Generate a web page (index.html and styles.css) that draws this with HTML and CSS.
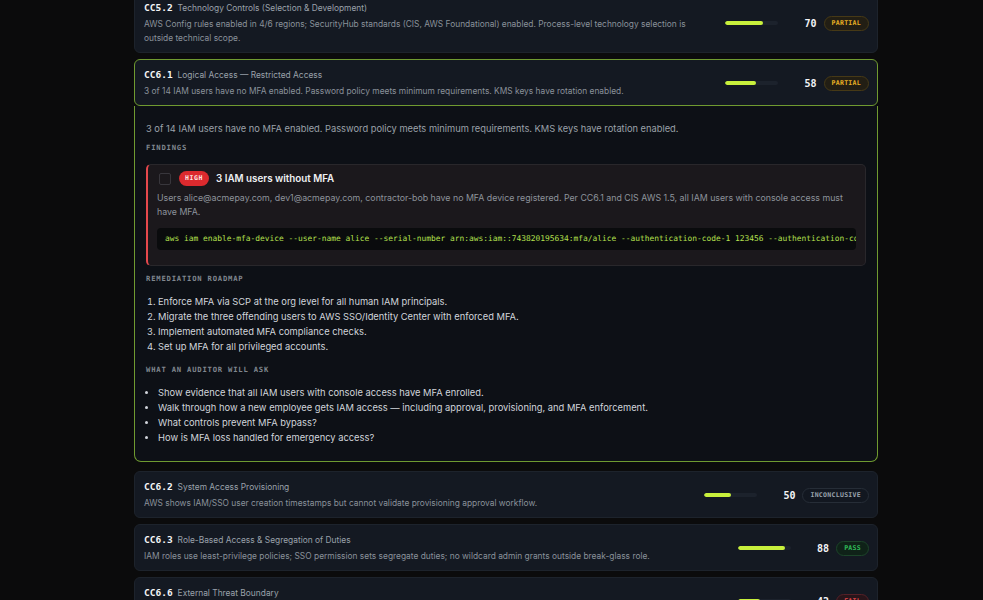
FILE: index.html
```html
<!DOCTYPE html>
<html lang="en">
<head>
<meta charset="utf-8">
<title>Controls</title>
<link rel="stylesheet" href="styles.css">
</head>
<body>
<main class="list">
  <article class="control">
    <div class="control-main">
      <div class="control-title"><span class="code">CC5.2</span><span class="name">Technology Controls (Selection &amp; Development)</span></div>
      <p class="control-desc">AWS Config rules enabled in 4/6 regions; SecurityHub standards (CIS, AWS Foundational) enabled. Process-level technology selection is outside technical scope.</p>
    </div>
    <div class="control-meta">
      <div class="bar"><div class="bar-fill" style="width:70%"></div></div>
      <span class="score">70</span>
      <span class="badge badge-partial">PARTIAL</span>
    </div>
  </article>

  <section class="expanded">
    <article class="control control-open">
      <div class="control-main">
        <div class="control-title"><span class="code">CC6.1</span><span class="name">Logical Access — Restricted Access</span></div>
        <p class="control-desc">3 of 14 IAM users have no MFA enabled. Password policy meets minimum requirements. KMS keys have rotation enabled.</p>
      </div>
      <div class="control-meta">
        <div class="bar"><div class="bar-fill" style="width:58%"></div></div>
        <span class="score">58</span>
        <span class="badge badge-partial">PARTIAL</span>
      </div>
    </article>
    <div class="detail">
      <p class="summary">3 of 14 IAM users have no MFA enabled. Password policy meets minimum requirements. KMS keys have rotation enabled.</p>
      <h4 class="label label-first">Findings</h4>
      <div class="finding">
        <div class="finding-head">
          <span class="checkbox"></span>
          <span class="sev">HIGH</span>
          <span class="finding-title">3 IAM users without MFA</span>
        </div>
        <p class="finding-desc">Users alice@acmepay.com, dev1@acmepay.com, contractor-bob have no MFA device registered. Per CC6.1 and CIS AWS 1.5, all IAM users with console access must have MFA.</p>
        <pre class="cmd">aws iam enable-mfa-device --user-name alice --serial-number arn:aws:iam::743820195634:mfa/alice --authentication-code-1 123456 --authentication-code-2 789012</pre>
      </div>
      <h4 class="label label-roadmap">Remediation Roadmap</h4>
      <ol class="steps">
        <li>Enforce MFA via SCP at the org level for all human IAM principals.</li>
        <li>Migrate the three offending users to AWS SSO/Identity Center with enforced MFA.</li>
        <li>Implement automated MFA compliance checks.</li>
        <li>Set up MFA for all privileged accounts.</li>
      </ol>
      <h4 class="label label-ask">What an auditor will ask</h4>
      <ul class="asks">
        <li>Show evidence that all IAM users with console access have MFA enrolled.</li>
        <li>Walk through how a new employee gets IAM access — including approval, provisioning, and MFA enforcement.</li>
        <li>What controls prevent MFA bypass?</li>
        <li>How is MFA loss handled for emergency access?</li>
      </ul>
    </div>
  </section>

  <article class="control">
    <div class="control-main">
      <div class="control-title"><span class="code">CC6.2</span><span class="name">System Access Provisioning</span></div>
      <p class="control-desc">AWS shows IAM/SSO user creation timestamps but cannot validate provisioning approval workflow.</p>
    </div>
    <div class="control-meta">
      <div class="bar"><div class="bar-fill" style="width:50%"></div></div>
      <span class="score">50</span>
      <span class="badge badge-inconclusive">INCONCLUSIVE</span>
    </div>
  </article>

  <article class="control">
    <div class="control-main">
      <div class="control-title"><span class="code">CC6.3</span><span class="name">Role-Based Access &amp; Segregation of Duties</span></div>
      <p class="control-desc">IAM roles use least-privilege policies; SSO permission sets segregate duties; no wildcard admin grants outside break-glass role.</p>
    </div>
    <div class="control-meta">
      <div class="bar"><div class="bar-fill" style="width:88%"></div></div>
      <span class="score">88</span>
      <span class="badge badge-pass">PASS</span>
    </div>
  </article>

  <article class="control">
    <div class="control-main">
      <div class="control-title"><span class="code">CC6.6</span><span class="name">External Threat Boundary</span></div>
      <p class="control-desc">Two security groups allow 0.0.0.0/0 ingress on port 22; WAF attached to public ALB.</p>
    </div>
    <div class="control-meta">
      <div class="bar"><div class="bar-fill" style="width:42%"></div></div>
      <span class="score">42</span>
      <span class="badge badge-fail">FAIL</span>
    </div>
  </article>
</main>
</body>
</html>
```
FILE: styles.css
```css
* { box-sizing: border-box; }

body {
  margin: 0;
  background: #0b0b0c;
  font-family: Inter, "Noto Sans", sans-serif;
  color: #d1d5db;
}

.list {
  width: 744px;
  margin: -8px 0 0 134px;
  display: flex;
  flex-direction: column;
  gap: 6px;
}

.control {
  display: flex;
  align-items: center;
  gap: 24px;
  padding: 8px 8px 7px 9px;
  background: #141922;
  border: 1px solid #1d232c;
  border-radius: 6px;
}

.control-main {
  flex: 1;
  min-width: 0;
}

.control-title {
  display: flex;
  align-items: baseline;
  height: 14px;
  line-height: 14px;
}

.code {
  font-family: "DejaVu Sans Mono", monospace;
  font-weight: 700;
  font-size: 9.5px;
  color: #f3f4f6;
}

.name {
  margin-left: 5px;
  font-size: 8.4px;
  color: #9aa1aa;
}

.control-desc {
  margin: 2px 0 0;
  font-size: 8.4px;
  line-height: 14px;
  color: #8a919a;
}

.control-meta {
  display: flex;
  align-items: center;
  flex-shrink: 0;
}

.bar {
  width: 53px;
  height: 4px;
  border-radius: 2px;
  background: #1c222c;
  margin-right: 26px;
  overflow: hidden;
}

.bar-fill {
  height: 100%;
  border-radius: 2px;
  background: #c8f03c;
}

.score {
  font-family: "DejaVu Sans Mono", monospace;
  font-weight: 700;
  font-size: 10px;
  color: #f3f4f6;
  margin-right: 7px;
}

.badge {
  display: inline-block;
  height: 15px;
  line-height: 13px;
  padding: 0 7px;
  border: 1px solid;
  border-radius: 8px;
  font-family: "DejaVu Sans Mono", monospace;
  font-weight: 700;
  font-size: 6.5px;
  letter-spacing: 0.3px;
}

.badge-partial { color: #e8b125; background: #221e14; border-color: #463916; }
.badge-inconclusive { color: #9aa3ad; background: #121720; border-color: #262d37; }
.badge-pass { color: #2fbf5a; background: #0f2218; border-color: #1c4429; }
.badge-fail { color: #e5484d; background: #28151a; border-color: #552027; }

.expanded {
  margin-bottom: 3px;
}

.control-open {
  border-color: #6f9a30;
}

.detail {
  background: #0d1016;
  border: 1px solid #6f9a30;
  border-top: none;
  border-radius: 0 0 7px 7px;
  padding: 15px 11px 16px;
}

.summary {
  margin: 0;
  font-size: 9.3px;
  line-height: 15px;
  color: #9ba1a9;
}

.label {
  margin: 10px 0;
  font-family: "DejaVu Sans Mono", monospace;
  font-weight: 700;
  font-size: 7.2px;
  line-height: 10px;
  letter-spacing: 0.8px;
  text-transform: uppercase;
  color: #80878f;
}

.label-first { margin: 7px 0 11px; }
.label-roadmap { margin-top: 8px; }
.label-ask { margin-top: 11px; }

.finding {
  background: #1b181c;
  border: 1px solid #29272b;
  border-left: 2px solid #e5484d;
  border-radius: 5px;
  padding: 6px 9px 15px;
}

.finding-head {
  display: flex;
  align-items: center;
  gap: 7px;
  height: 15px;
}

.checkbox {
  width: 12px;
  height: 12px;
  margin: 0 1px 0 2px;
  border: 1px solid #38363c;
  border-radius: 2px;
}

.sev {
  height: 15px;
  line-height: 15px;
  padding: 0 6px;
  border-radius: 8px;
  background: #dc2a2e;
  color: #fde4e4;
  font-family: "DejaVu Sans Mono", monospace;
  font-weight: 700;
  font-size: 6.5px;
  letter-spacing: 0.6px;
}

.finding-title {
  font-size: 9.8px;
  font-weight: 600;
  color: #eef0f3;
}

.finding-desc {
  margin: 5px 0 0;
  font-size: 8.8px;
  line-height: 14px;
  color: #8d939b;
}

.cmd {
  margin: 9px 0 0;
  padding: 5px 8px;
  background: #0a0b0d;
  border-radius: 4px;
  overflow: hidden;
  white-space: pre;
  font-family: "DejaVu Sans Mono", monospace;
  font-size: 7.9px;
  line-height: 12px;
  color: #b5e04f;
}

.steps,
.asks {
  margin: 0;
  padding-left: 12px;
  font-size: 9.35px;
  line-height: 15px;
  color: #d1d5db;
}
```
